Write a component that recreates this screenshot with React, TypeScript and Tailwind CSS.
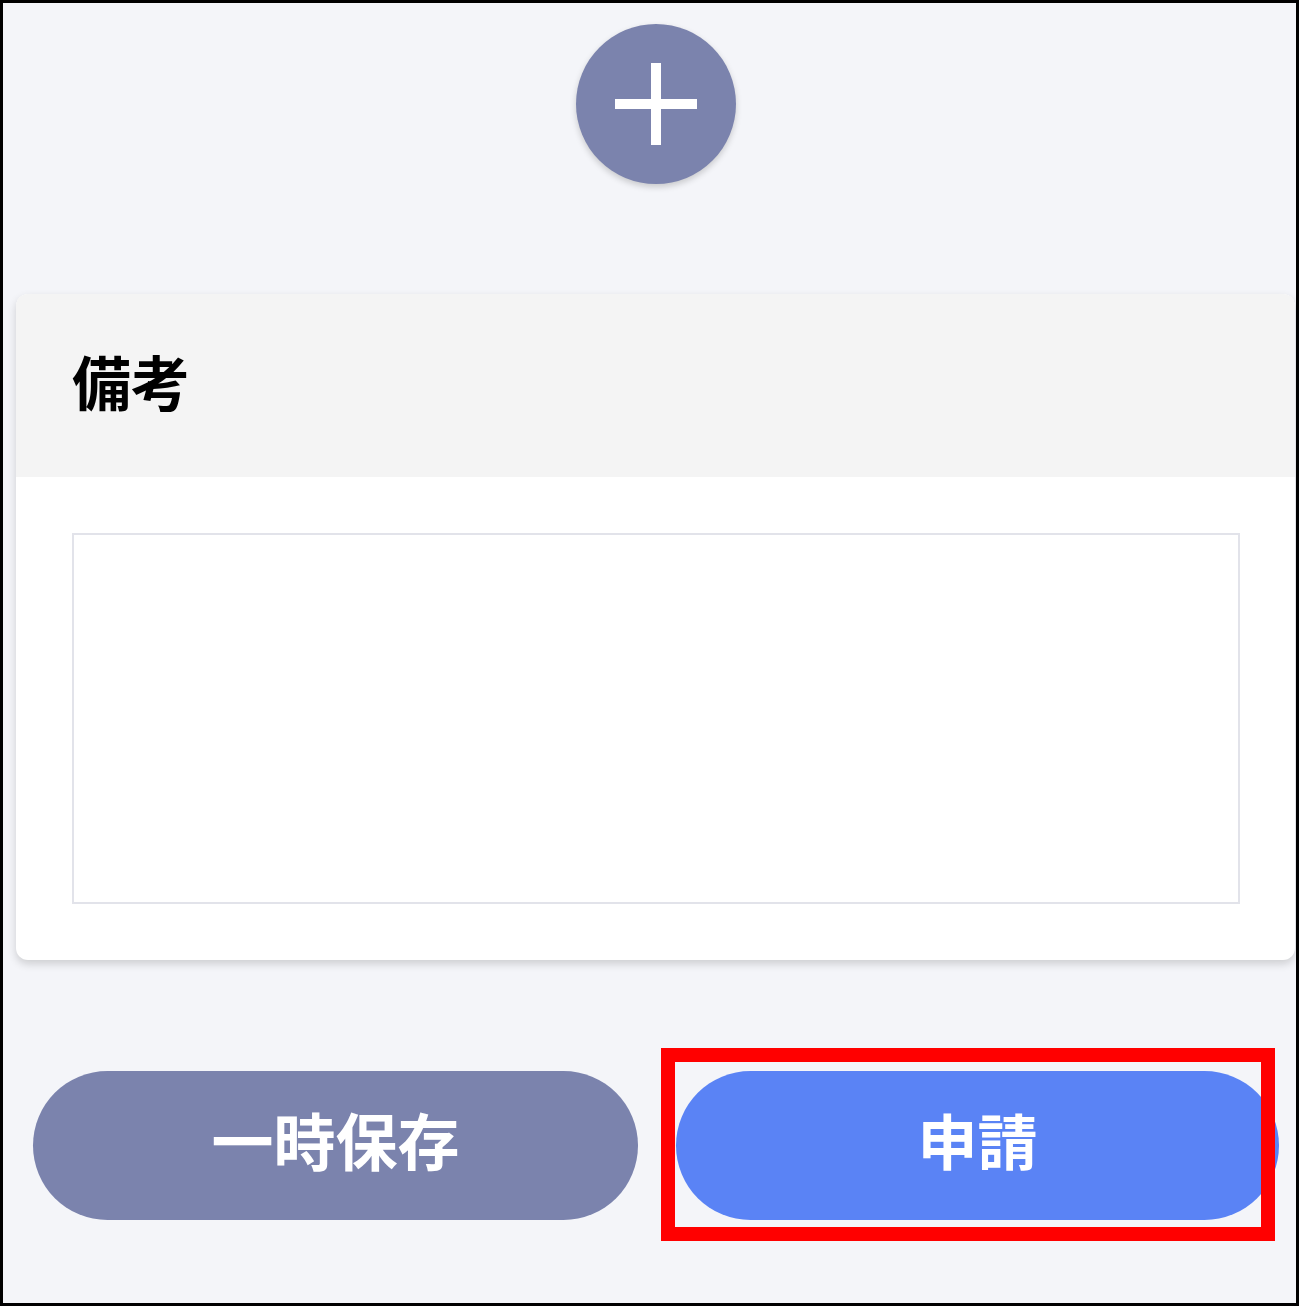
import React from "react";

export default function App() {
  return (
    <div
      className="relative w-[1299px] h-[1306px] border-[3px] border-black bg-[#f4f5f9] flex flex-col overflow-hidden"
      style={{ fontFamily: '"Noto Sans CJK JP", "Noto Sans", sans-serif' }}
    >
      <div className="mt-[21px] ml-[573px] w-[160px] h-[160px] rounded-full bg-[#7b83ad] shadow-[0_3px_6px_rgba(0,0,0,0.18)] flex items-center justify-center shrink-0">
        <svg width="82" height="82" viewBox="0 0 82 82">
          <rect x="36" y="0" width="10" height="82" fill="#ffffff" />
          <rect x="0" y="36" width="82" height="10" fill="#ffffff" />
        </svg>
      </div>

      <div className="mt-[110px] ml-[13px] mr-[1px] rounded-[12px] bg-white shadow-[0_4px_8px_rgba(0,0,0,0.16)] overflow-hidden shrink-0">
        <div className="h-[183px] bg-[#f4f4f4] flex items-center pl-[56px] pb-[10px]">
          <span className="text-[59px] font-bold text-black leading-none">備考</span>
        </div>
        <div className="p-[56px] pr-[55px]">
          <div className="h-[371px] border-2 border-[#e2e3ea] bg-white" />
        </div>
      </div>

      <div className="mt-[111px] flex gap-[38px] pl-[30px] pr-[17px] shrink-0">
        <button className="w-[605px] h-[149px] rounded-full bg-[#7b83ad] text-white text-[62px] font-bold flex items-center justify-center leading-none pb-[14px]">
          一時保存
        </button>
        <button className="w-[603px] h-[149px] rounded-full bg-[#5a83f5] text-white text-[60px] font-bold flex items-center justify-center leading-none pb-[14px]">
          申請
        </button>
      </div>

      <div className="absolute left-[658px] top-[1045px] w-[614px] h-[193px] border-[14px] border-[#ff0000] pointer-events-none" />
    </div>
  );
}
